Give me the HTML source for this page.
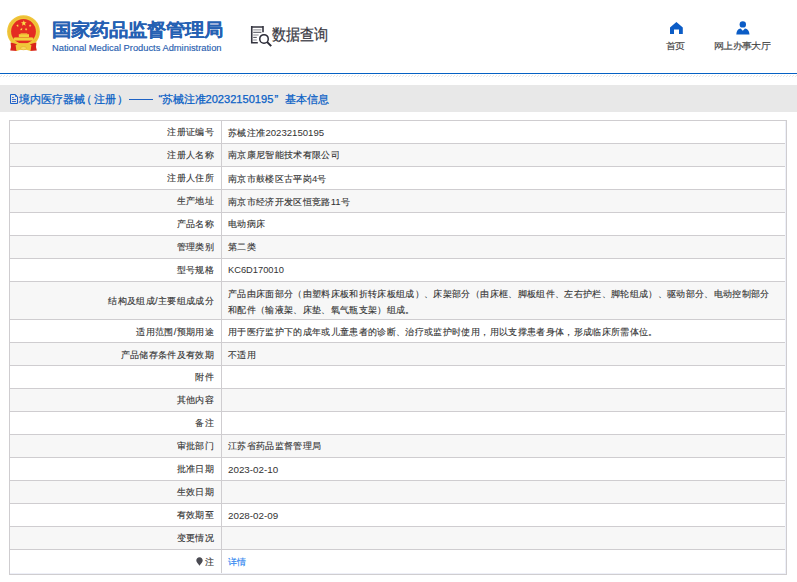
<!DOCTYPE html>
<html><head><meta charset="utf-8">
<style>
*{margin:0;padding:0;box-sizing:border-box}
html,body{width:797px;height:582px;overflow:hidden;background:#fff;font-family:"Liberation Sans",sans-serif;color:#333}
.abs{position:absolute}
#emblem{left:6px;top:14px;width:35px;height:39px}
#cn{left:51.5px;top:17.5px;font-size:19px;font-weight:bold;color:#2560b3;white-space:nowrap;line-height:24px;transform:scaleY(0.93);transform-origin:0 55%;-webkit-text-stroke:0.12px currentColor}
#en{left:52px;top:42.3px;-webkit-text-stroke:0.15px currentColor;font-size:9.33px;color:#2a5fb0;white-space:nowrap;line-height:12px}
#sq-icon{left:250px;top:25px;width:23px;height:22px}
#sq{left:272px;top:24px;font-size:14px;color:#383842;-webkit-text-stroke:0.2px currentColor;white-space:nowrap;line-height:20px;transform:scaleY(1.13);transform-origin:50% 52%}
.nav{font-size:10px;letter-spacing:-0.66px;-webkit-text-stroke:0.15px currentColor;transform:scaleY(0.9);transform-origin:0 80%;color:#444;white-space:nowrap;line-height:12px}
#line{left:0;top:73px;width:797px;height:1px;background:#0561c4}
#hatch{left:0;top:75px;width:797px;height:2px;background:repeating-linear-gradient(135deg,#fff 0,#fff 1.2px,#e6e6e6 1.2px,#e6e6e6 2.12px)}
#bar{left:0;top:85px;width:797px;height:27px;background:#e8e8e8}
.bt{top:91px;font-size:11px;color:#0860c6;white-space:nowrap;line-height:16px;-webkit-text-stroke:0.25px currentColor}
.btd{font-size:11.1px}
#tbl{left:9px;top:120px;width:778px}
table{border-collapse:collapse;width:778px;table-layout:fixed}
td{border:1px solid #cfcdd0;padding-top:1px;font-size:9.33px;letter-spacing:0.34px;line-height:15px;vertical-align:middle;color:#333;-webkit-text-stroke:0.12px currentColor}
td.l{text-align:right;padding-right:7px;width:212px}
td.v{padding-left:6px;padding-right:8px}
tr{height:23px}
tr.lo td{padding-top:3px}
.n{font-size:9.6px;letter-spacing:0;-webkit-text-stroke:0}
tr:nth-child(even) td{background:#f7f7f7}
</style></head><body>
<svg id="emblem" class="abs" viewBox="0 0 35 39">
  <circle cx="17.5" cy="17.6" r="16.4" fill="#f0c63a"/>
  <circle cx="17.5" cy="17.6" r="14.6" fill="none" stroke="#e4a82a" stroke-width="0.6" opacity="0.6"/>
  <circle cx="17.5" cy="17.4" r="12.4" fill="#e42c22"/>
  <path d="M4.6 28.5 L10.8 30 L11 37 L4.2 36.4 Q5.5 33 4.6 28.5 Z M30.4 28.5 L24.2 30 L24 37 L30.8 36.4 Q29.5 33 30.4 28.5 Z" fill="#d9231c"/>
  <path d="M9.6 31 Q17.5 27.5 25.4 31 L24.6 37 Q17.5 34 10.4 37 Z" fill="#f0c63a"/>
  <ellipse cx="17.5" cy="34.2" rx="3" ry="1.6" fill="#f7d85a" stroke="#e0a020" stroke-width="0.5"/>
  <path d="M7 26 Q17.5 33 28 26 L28 28.5 Q17.5 34 7 28.5 Z" fill="#f0c63a"/>
  <rect x="12.8" y="20.2" width="10.2" height="2.9" fill="#f3cf3c"/>
  <rect x="14.5" y="19.4" width="6.8" height="1" fill="#f3cf3c"/>
  <rect x="7.8" y="23.6" width="19.4" height="3" fill="#f3cf3c"/>
  <rect x="9" y="23.2" width="17" height="0.5" fill="#e8b030"/>
  <polygon points="17.80,6.20 18.54,8.18 20.65,8.27 19.00,9.59 19.56,11.63 17.80,10.46 16.04,11.63 16.60,9.59 14.95,8.27 17.06,8.18" fill="#fbe04a"/>
  <polygon points="11.00,10.24 11.67,11.01 12.64,10.71 12.11,11.58 12.70,12.41 11.71,12.17 11.10,12.99 11.02,11.97 10.05,11.65 11.00,11.26" fill="#fbe04a"/>
  <polygon points="24.60,10.24 24.60,11.26 25.55,11.65 24.58,11.97 24.50,12.99 23.89,12.17 22.90,12.41 23.49,11.58 22.96,10.71 23.93,11.01" fill="#fbe04a"/>
  <polygon points="15.05,13.87 15.57,14.75 16.58,14.62 15.90,15.38 16.34,16.31 15.41,15.90 14.66,16.60 14.76,15.59 13.86,15.10 14.86,14.88" fill="#fbe04a"/>
  <polygon points="20.35,13.87 20.54,14.88 21.54,15.10 20.64,15.59 20.74,16.60 19.99,15.90 19.06,16.31 19.50,15.38 18.82,14.62 19.83,14.75" fill="#fbe04a"/>
</svg>
<div id="cn" class="abs">国家药品监督管理局</div>
<div id="en" class="abs">National Medical Products Administration</div>
<svg id="sq-icon" class="abs" viewBox="0 0 23 22">
  <path d="M1 1.95 H13.8 M13 1.1 V7.3 M1.75 1.1 V18.4 M1 17.8 H7.8" stroke="#34343f" stroke-width="1.6" fill="none"/>
  <path d="M3.2 4.9 H11.4 M3.2 10 H8.6 M3.2 15 H6.8" stroke="#8a8a92" stroke-width="1"/>
  <path d="M3.2 7.3 H11.4 M3.2 12.4 H6.8" stroke="#3a3a44" stroke-width="0.9"/>
  <circle cx="14" cy="13.9" r="4.25" stroke="#2a2a36" stroke-width="1.5" fill="#fff"/>
  <path d="M17.2 17.1 L21.2 21.1" stroke="#2a2a36" stroke-width="2"/>
</svg>
<div id="sq" class="abs">数据查询</div>
<svg class="abs" style="left:669.5px;top:22px" width="13" height="12" viewBox="0 0 13 12">
  <path d="M6.4 0 L12.8 5.6 V12 H9 V7.6 H4 V12 H0 V5.6 Z" fill="#0b5cc6"/>
</svg>
<div class="abs nav" style="left:666px;top:40px">首页</div>
<svg class="abs" style="left:736px;top:21px" width="14" height="14" viewBox="0 0 14 14">
  <circle cx="6.8" cy="3.4" r="3.2" fill="#0b5cc6"/>
  <path d="M0.3 13.5 Q0.6 8.2 4.6 7.6 L6.8 9.8 L9 7.6 Q13 8.2 13.5 13.5 Z" fill="#0b5cc6"/>
</svg>
<div class="abs nav" style="left:714px;top:40px">网上办事大厅</div>
<div id="line" class="abs"></div>
<div id="hatch" class="abs"></div>
<div id="bar" class="abs"></div>
<svg class="abs" style="left:9px;top:94px" width="10" height="10" viewBox="0 0 10 10">
  <path d="M1.5 0.5 H6.3 L8.5 2.7 V9.5 H1.5 Z" fill="none" stroke="#1a62c8" stroke-width="1"/>
  <path d="M6.5 1 V2.5 H8" fill="none" stroke="#1a62c8" stroke-width="0.9"/>
  <path d="M3 3.5 H4.8 M3 5.5 H7 M3 7.5 H7" stroke="#2a5cc8" stroke-width="0.9"/>
</svg>
<div class="bt abs" style="left:19px">境内医疗器械</div>
<div class="bt abs" style="left:80.5px">（</div>
<div class="bt abs" style="left:93.5px">注册</div>
<div class="bt abs" style="left:117px">）</div>
<div class="abs" style="left:129px;top:99px;width:23.5px;height:1px;background:#1d62c4"></div>
<div class="bt abs" style="left:158.5px">“</div>
<div class="bt abs" style="left:162.3px">苏械注准</div>
<div class="bt abs btd" style="left:205.5px">20232150195</div>
<div class="bt abs" style="left:274.5px">”</div>
<div class="bt abs" style="left:285px">基本信息</div>
<div id="tbl" class="abs">
<table>
<tr><td class="l">注册证编号</td><td class="v">苏械注准<span class="n">20232150195</span></td></tr>
<tr><td class="l">注册人名称</td><td class="v">南京康尼智能技术有限公司</td></tr>
<tr><td class="l">注册人住所</td><td class="v">南京市鼓楼区古平岗<span class="n">4</span>号</td></tr>
<tr><td class="l">生产地址</td><td class="v">南京市经济开发区恒竞路<span class="n">11</span>号</td></tr>
<tr><td class="l">产品名称</td><td class="v">电动病床</td></tr>
<tr><td class="l">管理类别</td><td class="v">第二类</td></tr>
<tr><td class="l">型号规格</td><td class="v"><span class="n" style="font-size:9.3px">KC6D170010</span></td></tr>
<tr style="height:38px"><td class="l">结构及组成/主要组成成分</td><td class="v" style="line-height:15.5px;padding-top:4px">产品由床面部分（由塑料床板和折转床板组成）、床架部分（由床框、脚板组件、左右护栏、脚轮组成）、驱动部分、电动控制部分和配件（输液架、床垫、氧气瓶支架）组成。</td></tr>
<tr class="lo"><td class="l">适用范围/预期用途</td><td class="v">用于医疗监护下的成年或儿童患者的诊断、治疗或监护时使用，用以支撑患者身体，形成临床所需体位。</td></tr>
<tr class="lo"><td class="l">产品储存条件及有效期</td><td class="v">不适用</td></tr>
<tr><td class="l">附件</td><td class="v"></td></tr>
<tr><td class="l">其他内容</td><td class="v"></td></tr>
<tr><td class="l">备注</td><td class="v"></td></tr>
<tr><td class="l">审批部门</td><td class="v">江苏省药品监督管理局</td></tr>
<tr><td class="l">批准日期</td><td class="v"><span class="n" style="font-size:9.8px">2023-02-10</span></td></tr>
<tr><td class="l">生效日期</td><td class="v"></td></tr>
<tr><td class="l">有效期至</td><td class="v"><span class="n" style="font-size:9.8px">2028-02-09</span></td></tr>
<tr><td class="l">变更情况</td><td class="v"></td></tr>
<tr style="height:25px"><td class="l"><svg width="7" height="9" viewBox="0 0 7 9" style="vertical-align:-1px;margin-right:1.5px"><path d="M3.5 0.3 C1.6 0.3 0.3 1.7 0.3 3.4 C0.3 5.2 2.2 6.4 3.5 8.8 C4.8 6.4 6.7 5.2 6.7 3.4 C6.7 1.7 5.4 0.3 3.5 0.3 Z" fill="#4a4a52"/></svg>注</td><td class="v" style="color:#1f7fef">详情</td></tr>
</table>
</div>
<div class="abs" style="left:785px;top:121px;width:1px;height:453px;background:#eef0f8"></div>
<div class="abs" style="left:10px;top:573px;width:776px;height:1px;background:#eef0f8"></div>
</body></html>
